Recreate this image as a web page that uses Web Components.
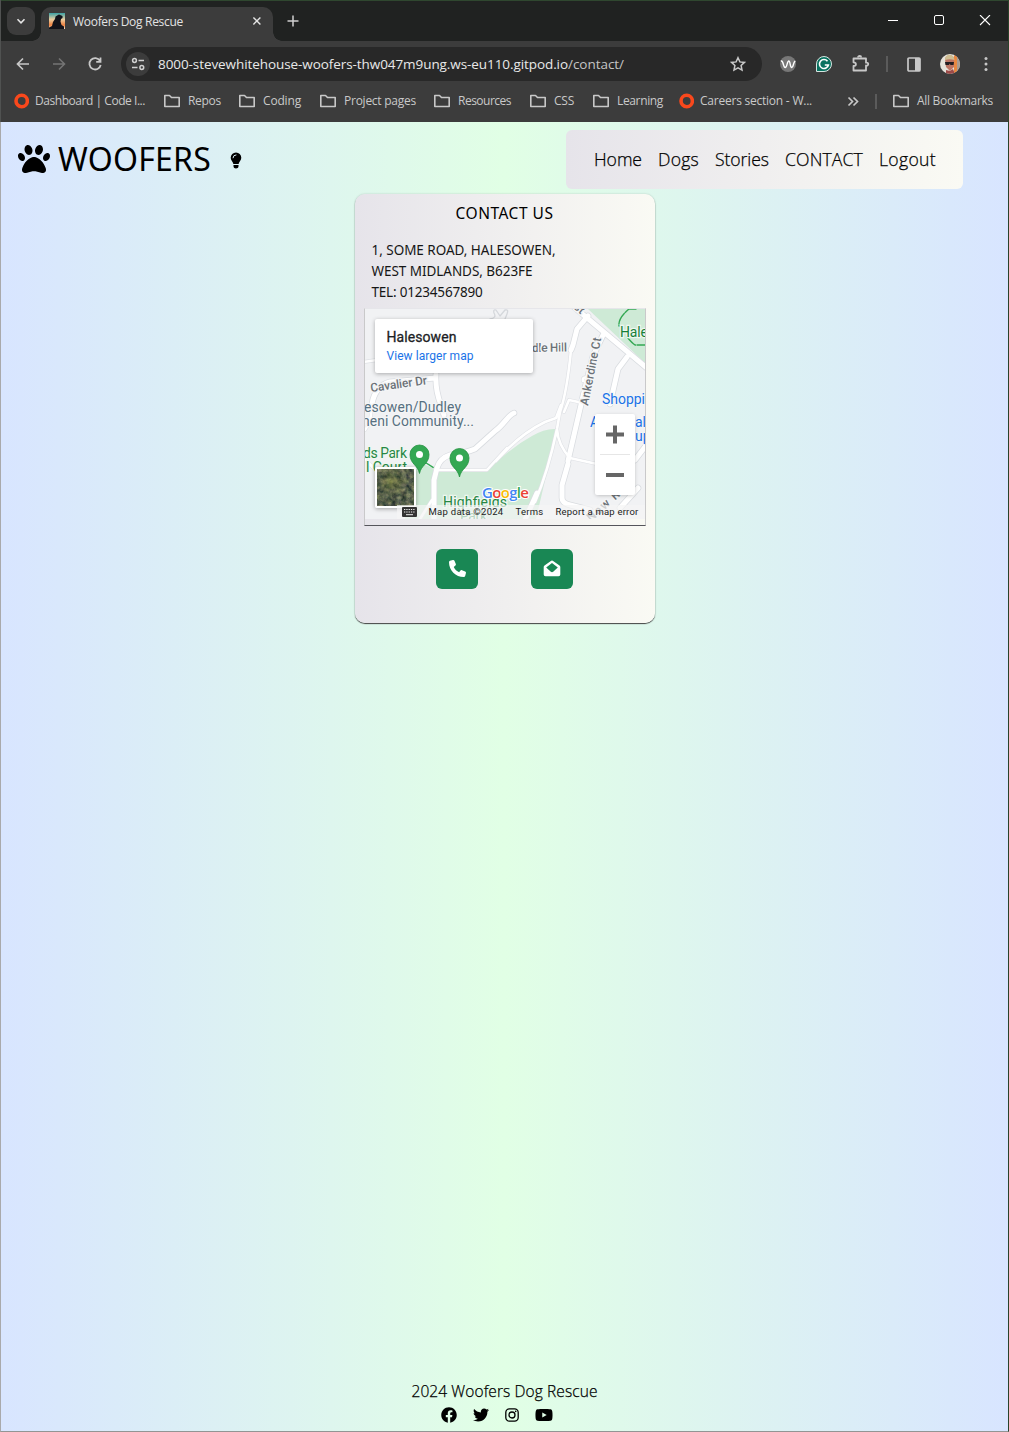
<!DOCTYPE html>
<html lang="en">
<head>
<meta charset="utf-8">
<title>Woofers Dog Rescue</title>
<style>
html,body{margin:0;height:100%;overflow:hidden}
body{font-family:"Open Sans","Noto Sans",sans-serif}
</style>
</head>
<body>
<browser-window>
  <tab-strip slot="chrome"></tab-strip>
  <tool-bar slot="chrome"></tool-bar>
  <bookmark-bar slot="chrome"></bookmark-bar>
  <site-header></site-header>
  <contact-card></contact-card>
  <site-footer></site-footer>
</browser-window>
<script>
const make = (name, html, after) => customElements.define(name, class extends HTMLElement {
  constructor(){ super(); this.attachShadow({mode:'open'}).innerHTML = typeof html === 'function' ? html(this) : html; }
  connectedCallback(){ if (after) after(this); }
});

make('browser-window', `<style>
:host{display:flex;flex-direction:column;box-sizing:border-box;width:1009px;height:1432px;border-left:1px solid #a9a9ab;border-right:1px solid #29432a;border-bottom:1px solid #929594;background:#3c3c3c}
.chrome{flex:none;height:122px;margin-left:-1px;border-left:1px solid #505251;box-sizing:border-box;background:#3c3c3c}
main{flex:1;display:flex;flex-direction:column;align-items:center;background:linear-gradient(90deg,#d8e5ff 0%,#e1ffe5 50%,#d8e5ff 100%);color:#000}
</style><div class="chrome"><slot name="chrome"></slot></div><main><slot></slot></main>`);

make('tab-strip', `<style>
:host{display:flex;height:41px;box-sizing:border-box;background:#202221;border-top:1px solid #2f472f;padding-left:6px;color:#e3e3e3;font-size:12px}
.drop{width:28px;height:28px;margin-top:6px;border-radius:9px;background:#3c3c3c}
.tab{position:relative;display:flex;align-items:center;width:232px;height:34px;box-sizing:border-box;margin:6px 0 0 6px;padding:0 0 6px 8px;border-radius:10px 10px 0 0;background:#3c3c3c}
.tab:before,.tab:after{content:"";position:absolute;bottom:0;width:9px;height:9px;background:radial-gradient(circle at 0 0,transparent 8.5px,#3c3c3c 9px)}
.tab:before{left:-9px}.tab:after{right:-9px;background:radial-gradient(circle at 100% 0,transparent 8.5px,#3c3c3c 9px)}
fit-text{margin:0 69px 0 8px}
svg{display:block;flex:none}
.plus{margin:14px 0 0 14px}
.win{display:flex;margin:14px 17px 0 auto;gap:34px}
</style>
<svg class="drop" viewBox="0 0 28 28" fill="none" stroke="#e3e3e3" stroke-width="1.6"><path d="M10.500 12.300l3.500 3.500 3.500-3.500"/></svg>
<div class="tab"><svg width="16" height="16"><defs><linearGradient id="g" x2="0" y2="1"><stop stop-color="#3ca1a5"/><stop offset=".4" stop-color="#e9cda0"/><stop offset=".75" stop-color="#ee8140"/><stop offset="1" stop-color="#f3e1c9"/></linearGradient></defs><rect width="16" height="16" fill="url(#g)"/><path d="M0 16V14.500L3 13 4 9 6 6 6.500 3.500 9 2 10 1.500 13.500 3 13.500 5 12 6 11.500 8.500 12.500 12 15 13.500V16z" fill="#11121a"/></svg>
<fit-text w="110">Woofers Dog Rescue</fit-text><svg width="10" height="10" stroke="#e3e3e3" stroke-width="1.400"><path d="M1.400 1.400l7 7M8.400 1.400l-7 7"/></svg></div>
<svg class="plus" width="12" height="12" stroke="#d0d0d0" stroke-width="1.500"><path d="M6 .5v11M.5 6h11"/></svg>
<div class="win"><svg width="12" height="11" stroke="#fff"><path d="M1 5.500h10"/></svg><svg width="12" height="11" stroke="#fff" fill="none"><rect x="1.500" y=".5" width="9" height="9" rx="1.500"/></svg><svg width="12" height="11" stroke="#fff" stroke-width="1.100"><path d="M1 0l10 10M11 0L1 10"/></svg></div>`);

make('tool-bar', `<style>
:host{display:flex;align-items:center;padding:0 17px 0 15px;box-sizing:border-box;height:46px;margin-bottom:-3px;color:#e8e8e8;font-size:13.500px}
svg{flex:none;display:block}
.url{display:flex;align-items:center;box-sizing:border-box;width:641px;height:34px;border-radius:17px;background:#282828;margin:0 18px 0 18px;padding:0 16px 0 5px}
.dim{color:#c4c4c4;margin-right:auto}
.host{margin-left:8px}
.sep{width:2px;height:16px;background:#5b5b5b;margin:0 19px 0 16px}
</style>
<svg width="14" height="14" fill="none" stroke="#c8c8c8" stroke-width="1.700"><path d="M13 7H2M7 1.500L1.500 7 7 12.500"/></svg>
<svg style="margin-left:22px" width="14" height="14" fill="none" stroke="#747474" stroke-width="1.600"><path d="M1 7h11M7 1.500L12.500 7 7 12.500"/></svg>
<svg style="margin-left:21px" width="16" height="16" fill="none" stroke="#c8c8c8" stroke-width="1.800"><path d="M13 4.800A5.700 5.700 0 1 0 13.700 9M13.500 1.500v4.300H9.200"/></svg>
<div class="url"><svg width="24" height="24" fill="none" stroke="#d0d0d0" stroke-width="1.500"><circle cx="12" cy="12" r="12" fill="#3c3c3c" stroke="none"/><circle cx="8.500" cy="8.500" r="1.900"/><path d="M12.500 8.500H18M6 15.500h5.500"/><circle cx="15.800" cy="15.500" r="1.900"/></svg>
<fit-text class="host" w="410">8000-stevewhitehouse-woofers-thw047m9ung.ws-eu110.gitpod.io</fit-text><fit-text class="dim" w="56">/contact/</fit-text>
<svg width="16" height="16" fill="none" stroke="#c8c8c8" stroke-width="1.500"><path d="M8 1.700l1.900 4.200 4.600.5-3.400 3.100.9 4.600L8 11.800l-4 2.300.9-4.600L1.500 6.400l4.600-.5z"/></svg></div>
<svg width="16" height="16" fill="none" stroke="#fff" stroke-width="1.400"><circle cx="8" cy="8" r="8" fill="#777" stroke="none"/><path d="M.8 5.200C3.500 4 3.200 11.500 5.200 11.500 7.200 11.500 7 5 8.800 5 10.500 5 9.800 11.500 11.800 11.500 13.600 11.500 13 6 15.300 5"/></svg>
<svg style="margin-left:20px" width="16" height="16"><path d="M.5 15.500V8A7.500 7.500 0 1 1 8 15.500z" fill="#08715f" stroke="#d7e5e1"/><path d="M11.500 5.200A4.500 4.500 0 1 0 12.400 9H8.800" fill="none" stroke="#fff" stroke-width="1.600"/></svg>
<svg style="margin-left:20px" width="18" height="18" fill="none" stroke="#c8c8c8" stroke-width="1.800" stroke-linejoin="round"><path d="M1.500 3.500h12.500v4.200c3-.8 3 3.600 0 2.800v5H1.500v-4.500c3.200 0 3.200-3.700 0-3.700z"/><path d="M6 2.500c0-2 3.200-2 3.200 0" /></svg>
<div class="sep"></div>
<svg width="14" height="15"><rect x="1" y="1" width="12" height="13" rx="1" fill="none" stroke="#c8c8c8" stroke-width="1.700"/><path d="M8 1h5v13H8z" fill="#c8c8c8"/></svg>
<svg style="margin-left:19px" width="20" height="20"><clipPath id="c"><circle cx="10" cy="10" r="10"/></clipPath><g clip-path="url(#c)"><path d="M0 0h20v20H0z" fill="#e6e2da"/><path d="M14 0h3v20h-3z" fill="#e88741"/><path d="M17 0h3v20h-3z" fill="#ab9b90"/><path d="M5 5c1-5 9-5 9 0v8l-4 4-4-4z" fill="#bd7564"/><path d="M5 6c0-7 9-7 9.500 0-3-1-6.500-1-9.500 0z" fill="#cebd92"/><path d="M5 8h9l-.5 3h-3L9.700 9.500 9 11H5.500z" fill="#221c21"/><path d="M6 16l4 1 3-2 2 5H6z" fill="#9c4a48"/></g></svg>
<svg style="margin-left:23px" width="6" height="16" fill="#c8c8c8"><circle cx="3" cy="2.500" r="1.500"/><circle cx="3" cy="8" r="1.500"/><circle cx="3" cy="13.500" r="1.500"/></svg>`);

const marks=[['r',0,6,110,'Dashboard | Code I...'],['f',19,8,33,'Repos'],['f',18,8,38,'Coding'],['f',19,8,72,'Project pages'],['f',18,8,53,'Resources'],['f',19,8,20,'CSS'],['f',19,8,46,'Learning'],['r',16,6,112,'Careers section - W...']];
make('bookmark-bar', () => `<style>:host{display:flex;align-items:center;height:38px;box-sizing:border-box;padding:0 14px 4px 13px}
svg{display:block;flex:none}.more{margin-left:35px}.sep{flex:none;width:2px;height:15px;background:#5b5b5b;margin:0 16px 0 16px}</style>`+
marks.map(m=>`<book-mark kind="${m[0]}" style="margin-left:${m[1]}px"><fit-text w="${m[3]}">${m[4]}</fit-text></book-mark>`).join('')+
`<svg class="more" width="12" height="11" fill="none" stroke="#c8c8c8" stroke-width="1.700"><path d="M1.500 1.500l4 4-4 4M6.500 1.500l4 4-4 4"/></svg><div class="sep"></div><book-mark kind="f"><fit-text w="76">All Bookmarks</fit-text></book-mark>`);
make('book-mark', el => `<style>:host{display:flex;flex:none;align-items:center;color:#c9c9c9;font-size:12px;gap:${el.getAttribute('kind')=='r'?6:8}px}svg{display:block;flex:none}slot{display:block;margin-top:-1px}</style>`+
(el.getAttribute('kind')=='r'?`<svg width="15" height="16"><circle cx="7.700" cy="8" r="5.700" fill="none" stroke="#f9481c" stroke-width="3.600"/></svg>`
:`<svg width="16" height="14" fill="none" stroke="#c8c8c8" stroke-width="1.600" stroke-linejoin="round"><path d="M.8 1.500h4.700l2 2h7.700v9H.8z"/></svg>`)+'<slot></slot>');

make('site-header', `<style>
:host{display:flex;align-items:center;width:1007px;height:59px;box-sizing:border-box;margin-top:8px;padding:0 45px 0 17px}
svg{display:block}
.brand{font:32px "Noto Sans",sans-serif;margin:-2px 0 0 8px}
.paw{margin-top:-2px}
.bulb{margin:2px auto 0 19px}
nav{display:flex;align-items:center;gap:16px;height:59px;width:397px;box-sizing:border-box;padding:0 28px 2px;border-radius:6px;background:linear-gradient(90deg,#e6e4ea,#fafaf4);font-size:17.600px;font-weight:300}
nav fit-text{-webkit-text-stroke:.25px #000}
</style>
<svg class="paw" width="32" height="32" viewBox="0 0 512 512"><path d="M226.500 92.900c14.300 42.900-.3 86.200-32.600 96.800s-70.100-15.600-84.400-58.500s.3-86.200 32.600-96.800s70.100 15.600 84.400 58.500zM100.400 198.600c18.900 32.400 14.300 70.100-10.200 84.100s-59.700-.9-78.500-33.300S-2.700 179.300 21.800 165.300s59.700 .9 78.500 33.300zM69.200 401.200C121.600 259.900 214.700 224 256 224s134.400 35.900 186.800 177.200c3.600 9.700 5.200 20.100 5.200 30.500v1.600c0 25.800-20.900 46.700-46.700 46.700c-11.500 0-22.900-1.400-34-4.200l-88-22c-15.300-3.800-31.300-3.800-46.600 0l-88 22c-11.100 2.800-22.500 4.200-34 4.200C84.900 480 64 459.100 64 433.300v-1.600c0-10.400 1.600-20.800 5.200-30.500zM421.800 282.700c-24.500-14-29.100-51.700-10.200-84.100s54-47.300 78.500-33.300s29.100 51.700 10.200 84.100s-54 47.300-78.500 33.300zM310.100 189.700c-32.300-10.600-46.900-53.900-32.600-96.800s52.100-69.100 84.400-58.500s46.900 53.900 32.600 96.800s-52.100 69.100-84.400 58.500z"/></svg>
<fit-text class="brand" w="153">WOOFERS</fit-text>
<svg class="bulb" width="12" height="17" viewBox="0 0 12 17"><path d="M6 .5a5.300 5.300 0 0 1 5.300 5.300C11.300 8.500 9 9.700 8.600 12H3.400C3 9.700.7 8.500.7 5.800A5.300 5.300 0 0 1 6 .5zM3.500 13h5v1.200C8.500 17.200 3.500 17.200 3.500 14.200z"/><path d="M3 5.800A3 3 0 0 1 6 2.900" fill="none" stroke="#dceff5" stroke-linecap="round"/></svg>
<nav><fit-text w="48">Home</fit-text><fit-text w="41">Dogs</fit-text><fit-text w="54">Stories</fit-text><fit-text w="78">CONTACT</fit-text><fit-text w="57">Logout</fit-text></nav>`);

make('contact-card', `<style>
:host{display:flex;flex-direction:column;width:300px;height:429px;box-sizing:border-box;margin-top:5px;padding:0 9px;border-radius:10px;background:linear-gradient(90deg,#e6e4ea,#fafaf4);box-shadow:0 1px 1px #444,0 0 2px #b4c9be}
h1{margin:7px 0 0;height:24px;font:400 15.500px/24px "Noto Sans",sans-serif;text-align:center}
address{font-style:normal;font-size:13.500px;line-height:21px;margin:15px 0 6px 8px;height:63px;display:flex;flex-direction:column;font-family:"Noto Sans",sans-serif;font-weight:370;color:#161616}
.buttons{display:flex;justify-content:center;gap:53px;margin-top:23px}
</style><h1><fit-text w="98">CONTACT US</fit-text></h1>
<address><fit-text w="184">1, SOME ROAD, HALESOWEN,</fit-text><fit-text w="161">WEST MIDLANDS, B623FE</fit-text><fit-text w="111">TEL: 01234567890</fit-text></address>
<map-embed></map-embed>
<div class="buttons"><icon-button><svg width="17" height="17" viewBox="0 0 512 512" fill="#fff"><path d="M164.900 24.600c-7.700-18.600-28-28.500-47.400-23.200l-88 24C12.100 30.200 0 46 0 64C0 311.400 200.600 512 448 512c18 0 33.800-12.100 38.600-29.500l24-88c5.300-19.400-4.600-39.700-23.200-47.400l-96-40c-16.300-6.800-35.200-2.100-46.300 11.600L304.700 368C234.300 334.700 177.300 277.700 144 207.300L193.300 167c13.700-11.200 18.400-30 11.600-46.300l-40-96z"/></svg></icon-button>
<icon-button><svg width="18" height="17" viewBox="0 0 18 17"><path d="M9 .5Q9.700.5 10.500 1.200L16.500 5.500Q17.300 6.200 17.300 7V14.500Q17.300 16.300 15.500 16.300H2.500Q.7 16.300.7 14.500V7Q.7 6.200 1.500 5.500L7.500 1.200Q8.300.5 9 .5z" fill="#fff"/><path d="M9 3L14.800 7.600 10.200 11.700q-1.200.9-2.400 0L3.200 7.600z" fill="#198754"/></svg></icon-button></div>`);

make('icon-button', `<style>:host{display:flex;align-items:center;justify-content:center;width:42px;height:40px;box-sizing:border-box;padding-bottom:2px;border-radius:6px;background:#198754}</style><slot></slot>`);

const roads=['M574 307L648 369','M588 316L577 329 573 345 571 350','M604 333L593 356 583 396 568 461','M627 357L618 369 610 404','M514 413C508 415 504 425 495 431L475 449Q465 453 450 455 440 458 437 468L434 480V522','M436 374Q435 390 441 405L444 415','M372 404Q375 386 390 382L435 378','M537 493L524 522','M568 464L562 485V498Q562 503 570 505L590 510','M648 443L635 460','M620 508L638 488'];
const thin=['M571 350Q567 392 560 412L557 429Q548 472 535 502','M564 412L569 400 583 403','M557 429Q558 445 570 458L597 464','M496 461Q520 434 545 422L556 418 561 405','M438 470H487L507 448','M363 362L377 360','M583 381Q582 376 588 378','M365 459L378 473','M365 430Q372 420 371 410','M418 522L432 500'];
const pin=(x,y)=>`<path transform="translate(${x} ${y})" d="M0 18.500C-1.500 10-9.500 9-9.500-.5a9.500 9.500 0 0 1 19 0C9.500 9 1.500 10 0 18.500z" fill="#34a853" stroke="#22923f" stroke-width=".8"/><circle cx="${x}" cy="${y-.5}" r="3.500" fill="#fff"/>`;
make('map-embed', `<style>
:host{display:block;position:relative;flex:none;width:282px;height:218px;box-sizing:border-box;border:1px solid #c9c9ca;border-top-color:#e6e6ea;border-bottom:1.500px solid #55555b;font-family:Roboto,sans-serif;margin-top:-1px}
.map{display:block}
.info{position:absolute;left:10px;top:10px;width:158px;height:54px;box-sizing:border-box;padding:9px 12px;background:#fff;border-radius:2px;box-shadow:0 1px 4px rgba(0,0,0,.3);display:flex;flex-direction:column}
.info b{font-weight:400;font-size:14px;line-height:18px;color:#202124;-webkit-text-stroke:.3px #202124}.info a{font-size:12px;line-height:20px;color:#1a73e8}
.zoom{position:absolute;left:230px;top:105px;width:40px;height:81px;background:#fff;border-radius:2px;box-shadow:0 1px 4px -1px rgba(0,0,0,.3)}
.sat{position:absolute;left:10.5px;top:158px;border:2px solid #fff;border-radius:2px;box-shadow:0 1px 4px rgba(0,0,0,.35)}
.legal{position:absolute;right:0;top:196px;height:14px;width:248px;background:rgba(245,245,245,.7);display:flex;align-items:center;font-size:9.500px;color:#222}
.legal fit-text{line-height:12px;margin-left:12px}
svg{display:block}
</style>
<svg class="map" width="280" height="210" viewBox="365 309 280 210">
<rect x="365" y="309" width="280" height="210" fill="#f1f2f4"/>
<g fill="#ceead6"><path d="M588 309H645V363z"/><path d="M557 429Q545 428 532 436 510 448 487 471H438L433 519H536z"/><path d="M418 462L433 468V519H405V500z"/></g>
<g fill="none" stroke-linejoin="round" stroke-linecap="round"><path d="${roads.join('')}" stroke="#d9dce0" stroke-width="6.500"/><path d="${thin.join('')}" stroke="#dfe1e5" stroke-width="3.800"/><path d="${roads.join('')}" stroke="#fff" stroke-width="5"/><path d="${thin.join('')}" stroke="#fff" stroke-width="2.600"/>
<path d="M490 319Q497 318 494 313 493 309 496 310L500 316 505 310Q509 309 507 314L505 319" stroke="#d4d7db" stroke-width="1.300"/>
<path d="M636 309H629Q618 318 619 326M627 337Q632 343 635 345H645M423 461L434 468" stroke="#34a853" stroke-width="1.400" stroke-dasharray="12 1.500"/></g>
<g fill="#6b7177" font-size="12" font-weight="500" stroke="#f4f5f6" stroke-width="3" paint-order="stroke" stroke-linejoin="round">
<text x="371" y="392" transform="rotate(-8 371 392)" textLength="57" lengthAdjust="spacingAndGlyphs">Cavalier Dr</text><text x="532" y="352" textLength="35" transform="rotate(-1 532 352)">dle Hill</text>
<text x="588" y="406" transform="rotate(-79 588 406)" textLength="69">Ankerdine Ct</text><text x="573" y="308" transform="rotate(40 573 308)">st</text><text x="591" y="522" transform="rotate(-42 591 522)" textLength="48">New Rd</text></g>
<g font-size="14" fill="#577080" stroke="#f4f5f6" stroke-width="2.500" paint-order="stroke"><text x="364" y="412" textLength="97">esowen/Dudley</text><text x="362" y="426" textLength="112">neni Community...</text></g>
<g font-size="14" fill="#278744" stroke="#eef7f0" stroke-width="2.500" paint-order="stroke"><text x="363" y="458" textLength="44">ds Park</text><text x="366" y="472" textLength="41">l Court</text><text x="620" y="337" fill="#188038" textLength="28">Hale</text><text x="443" y="507" textLength="64">Highfields</text><text x="460" y="521" textLength="27">Park</text></g>
<g font-size="14" fill="#1a73e8" stroke="#f4f5f6" stroke-width="2" paint-order="stroke"><text x="602" y="404" textLength="43">Shoppi</text><text x="590" y="427">A</text><text x="635" y="427">al</text><text x="635" y="441">up</text></g>
${pin(419.500,455)}${pin(459.500,458.5)}
<text x="482" y="497.500" font-size="15" font-weight="600" stroke="#fff" stroke-width="2" paint-order="stroke" font-family="Open Sans" textLength="47"><tspan fill="#4285f4">G</tspan><tspan fill="#ea4335">o</tspan><tspan fill="#fbbc04">o</tspan><tspan fill="#4285f4">g</tspan><tspan fill="#34a853">l</tspan><tspan fill="#ea4335">e</tspan></text>
</svg>
<div class="info"><b><fit-text w="70">Halesowen</fit-text></b><a><fit-text w="87">View larger map</fit-text></a></div>
<svg class="zoom" viewBox="0 0 40 81"><path d="M11 20.500h18M20 11.500v18M11 61h18" stroke="#666" stroke-width="4"/><path d="M5 40.500h30" stroke="#e6e6e6"/></svg>
<svg class="sat" width="37" height="37"><defs><filter id="n" x="0" y="0" width="1" height="1" color-interpolation-filters="sRGB"><feTurbulence type="fractalNoise" baseFrequency=".2" numOctaves="4" seed="5"/><feColorMatrix values=".7 0 0 0 0 .6 .1 0 0 .03 .4 0 .1 0 .05 0 0 0 0 1"/></filter><radialGradient id="y" cx=".4" cy=".35" r=".5"><stop stop-color="#8a8f3a" stop-opacity=".5"/><stop offset="1" stop-color="#3f4c3b" stop-opacity=".1"/></radialGradient></defs><rect width="37" height="37" filter="url(#n)"/><rect width="37" height="37" fill="url(#y)"/></svg>
<div class="legal"><svg style="margin:0 0 0 5px" width="15" height="10"><rect width="15" height="10" rx="1" fill="#333"/><path d="M2 2.500h11M2 5h11" stroke="#eee" stroke-dasharray="1.300 1"/><path d="M4 7.700h7" stroke="#eee"/></svg><fit-text w="75">Map data ©2024</fit-text><fit-text w="28">Terms</fit-text><fit-text w="83">Report a map error</fit-text></div>`);

make('site-footer', `<style>
:host{display:flex;flex-direction:column;align-items:center;margin-top:auto;height:52px;font-size:15.500px;font-weight:300;line-height:24px}
fit-text{-webkit-text-stroke:.25px #000}
.social{display:flex;align-items:center;width:112px;height:16px;margin:4px 0 0 -16px}
svg{display:block;flex:none}
</style><fit-text w="186">2024 Woofers Dog Rescue</fit-text>
<div class="social"><svg width="16" height="16" viewBox="0 0 512 512"><path d="M504 256C504 119 393 8 256 8S8 119 8 256c0 123.780 90.690 226.380 209.250 245V327.690h-63V256h63v-54.640c0-62.150 37-96.480 93.670-96.480 27.140 0 55.520 4.840 55.520 4.840v61h-31.280c-30.800 0-40.410 19.120-40.410 38.730V256h68.780l-11 71.690h-57.780V501C413.310 482.380 504 379.780 504 256z"/></svg>
<svg style="margin-left:16px" width="16" height="16" viewBox="0 0 512 512"><path d="M459.370 151.716c.325 4.548.325 9.097.325 13.645 0 138.720-105.583 298.558-298.558 298.558-59.452 0-114.680-17.219-161.137-47.106 8.447.974 16.568 1.299 25.340 1.299 49.055 0 94.213-16.568 130.274-44.832-46.132-.975-84.792-31.188-98.112-72.772 6.498.974 12.995 1.624 19.818 1.624 9.421 0 18.843-1.300 27.614-3.573-48.081-9.747-84.143-51.980-84.143-102.985v-1.299c13.969 7.797 30.214 12.670 47.431 13.319-28.264-18.843-46.781-51.005-46.781-87.391 0-19.492 5.197-37.360 14.294-52.954 51.655 63.675 129.300 105.258 216.365 109.807-1.624-7.797-2.599-15.918-2.599-24.040 0-57.828 46.782-104.934 104.934-104.934 30.213 0 57.502 12.670 76.670 33.137 23.715-4.548 46.456-13.320 66.599-25.340-7.798 24.366-24.366 44.833-46.132 57.827 21.117-2.273 41.584-8.122 60.426-16.243-14.292 20.791-32.161 39.308-52.628 54.253z"/></svg>
<svg style="margin-left:16px" width="14" height="16" fill="none" stroke="#000" stroke-width="1.300"><rect x=".8" y="1.800" width="12.400" height="12.400" rx="3.600"/><circle cx="7" cy="8" r="3"/><circle cx="10.700" cy="4.400" r=".8" fill="#000" stroke="none"/></svg>
<svg style="margin-left:16px" width="18" height="16" viewBox="0 0 576 512"><path d="M549.655 124.083c-6.281-23.650-24.787-42.276-48.284-48.597C458.781 64 288 64 288 64S117.220 64 74.629 75.486c-23.497 6.322-42.003 24.947-48.284 48.597-11.412 42.867-11.412 132.305-11.412 132.305s0 89.438 11.412 132.305c6.281 23.650 24.787 41.500 48.284 47.821C117.220 448 288 448 288 448s170.780 0 213.371-11.486c23.497-6.321 42.003-24.171 48.284-47.821 11.412-42.867 11.412-132.305 11.412-132.305s0-89.438-11.412-132.305zm-317.510 213.508V175.185l142.739 81.205-142.739 81.201z"/></svg></div>`);

/* Text run that spreads its letters to fill the width given in "w". */
make('fit-text', `<style>:host{display:inline-block;flex:none;white-space:pre}span{display:inline-block}</style><span><slot></slot></span>`, el => {
  const s = el.shadowRoot.querySelector('span'), w = +el.getAttribute('w');
  el.style.width = w + 'px';
  s.style.letterSpacing = '0px';
  const n = s.getBoundingClientRect().width;
  s.style.letterSpacing = (w - n) / el.textContent.length + 'px';
});
</script>
</body>
</html>
